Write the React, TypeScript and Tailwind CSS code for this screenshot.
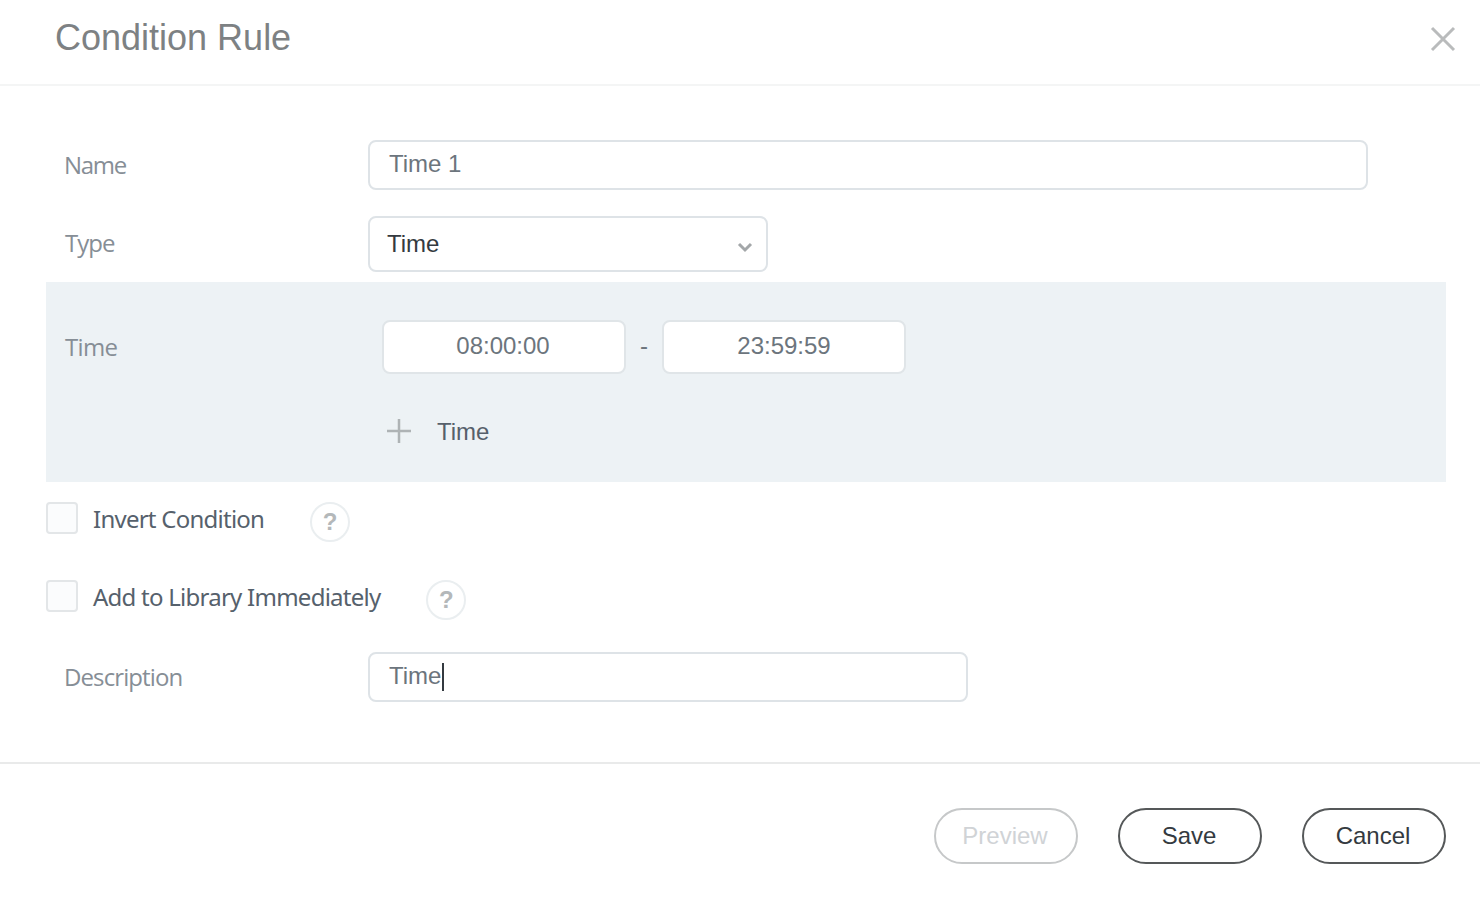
import { FC, ReactNode } from "react";

const label = "w-[322px] text-[24px] text-[#868e96] font-['Open_Sans',sans-serif]";
const arial = "font-['Liberation_Sans',sans-serif]";

const HelpIcon: FC = () => (
  <span
    className={`ml-[46px] flex h-[40px] w-[40px] items-center justify-center rounded-full border-2 border-[#eaeef0] bg-white text-[24px] font-bold text-[#b4b8ba] ${arial}`}
  >
    ?
  </span>
);

const CheckRow: FC<{ children: ReactNode; rowClass: string }> = ({ children, rowClass }) => (
  <div className={`flex items-start ${rowClass}`}>
    <span className="h-[32px] w-[32px] rounded-[4px] border-2 border-[#e3e6e8] bg-[#fbfcfd]" />
    <span className="ml-[15px] h-[32px] text-[24px] leading-[34px] text-[#56616c] font-['Noto_Sans',sans-serif] tracking-[-0.75px]">
      {children}
    </span>
    <HelpIcon />
  </div>
);

const PillButton: FC<{ children: ReactNode; disabled?: boolean }> = ({ children, disabled }) => (
  <button
    className={`h-[56px] w-[144px] rounded-[28px] border-2 bg-white pr-[2px] text-[24px] ${arial} ${
      disabled ? "border-[#c6c8c9] text-[#d0d3d6]" : "border-[#555859] text-[#343a40]"
    }`}
  >
    {children}
  </button>
);

const App: FC = () => {
  return (
    <div className="h-[906px] w-[1480px] overflow-hidden bg-white">
      <header className="flex h-[86px] items-start justify-between border-b-2 border-[#f4f5f5]">
        <h1 className={`pl-[55px] pt-[16px] text-[36px] leading-[44px] text-[#7d8183] ${arial}`}>
          Condition Rule
        </h1>
        <svg className="mr-[24px] mt-[26px]" width="26" height="26" viewBox="0 0 26 26" fill="none">
          <path d="M2 2 L24 24 M24 2 L2 24" stroke="#b9bbbc" strokeWidth="3" />
        </svg>
      </header>

      <div className="pl-[46px] pr-[34px] pt-[54px]">
        <div className="flex h-[50px] items-center">
          <span className={`${label} pl-[18px] tracking-[-1.3px]`}>Name</span>
          <div className={`flex h-[50px] w-[1000px] items-center rounded-[8px] border-2 border-[#dee3e7] pb-[2px] pl-[19px] text-[24px] text-[#6c757d] ${arial}`}>
            Time 1
          </div>
        </div>

        <div className="mt-[26px] flex h-[56px] items-center">
          <span className={`${label} pb-[2px] pl-[19px] tracking-[-1px]`}>Type</span>
          <div className={`flex h-[56px] w-[400px] items-center justify-between rounded-[8px] border-2 border-[#dee3e7] pl-[17px] pr-[13px] text-[24px] text-[#343a40] ${arial}`}>
            Time
            <svg className="mt-[6px]" width="16" height="11" viewBox="0 0 16 11" fill="none">
              <path d="M2 2 L8 8 L14 2" stroke="#a3a7a9" strokeWidth="3" />
            </svg>
          </div>
        </div>

        <section className="mt-[10px] h-[200px] bg-[#edf2f5] pt-[38px]">
          <div className="flex h-[54px] items-center">
            <span className={`${label} !w-[336px] pl-[19px] tracking-[-0.7px]`}>Time</span>
            <div className={`flex h-[54px] w-[244px] items-center justify-center rounded-[8px] border-2 border-[#e0e5e8] bg-white pb-[2px] pr-[2px] text-[24px] text-[#6c757d] ${arial}`}>
              08:00:00
            </div>
            <span className={`w-[36px] pb-[2px] text-center text-[24px] text-[#6c757d] ${arial}`}>-</span>
            <div className={`flex h-[54px] w-[244px] items-center justify-center rounded-[8px] border-2 border-[#e0e5e8] bg-white pb-[2px] text-[24px] text-[#6c757d] ${arial}`}>
              23:59:59
            </div>
          </div>
          <div className="ml-[341px] mt-[44px] flex h-[26px] items-center">
            <svg width="24" height="24" viewBox="0 0 24 24" fill="none">
              <path d="M0 12 H24 M12 0 V24" stroke="#aeb3b5" strokeWidth="2.5" />
            </svg>
            <span className={`ml-[26px] pt-[2px] text-[24px] text-[#56606b] ${arial}`}>Time</span>
          </div>
        </section>

        <CheckRow rowClass="mt-[20px]">Invert Condition</CheckRow>
        <CheckRow rowClass="mt-[38px]">Add to Library Immediately</CheckRow>

        <div className="mt-[32px] flex h-[50px] items-center">
          <span className={`${label} pl-[18px] tracking-[-0.9px]`}>Description</span>
          <div className={`flex h-[50px] w-[600px] items-center rounded-[8px] border-2 border-[#dee3e7] pb-[2px] pl-[19px] text-[24px] text-[#6c757d] ${arial}`}>
            Time
            <span className="ml-[1px] mt-[2px] h-[28px] w-[2px] bg-[#343a40]" />
          </div>
        </div>
      </div>

      <footer className="mt-[60px] flex justify-end gap-[40px] border-t-2 border-[#e9eaea] pr-[34px] pt-[44px]">
        <PillButton disabled>Preview</PillButton>
        <PillButton>Save</PillButton>
        <PillButton>Cancel</PillButton>
      </footer>
    </div>
  );
};

export default App;
